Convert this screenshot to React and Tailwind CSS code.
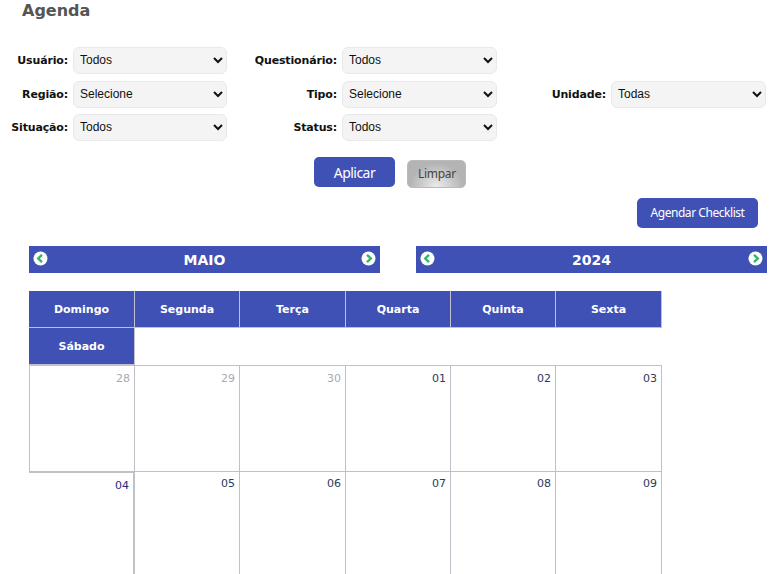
import React from 'react';

const mono = "font-['DejaVu_Sans',sans-serif]";

const Field = ({ label, value, options }) => (
  <>
    <label className={`${mono} text-[11px] font-bold tracking-[-0.15px] text-[#111] text-right self-center pt-[2px]`}>{label}</label>
    <select
      defaultValue={value}
      className="ml-[5px] w-[calc(100%-5px)] h-[27px] pl-[2px] pb-[2px] rounded-[6px] border border-[#e9e9e9] bg-[#f4f4f4] text-[12px] text-[#111] font-['Liberation_Sans',sans-serif]"
    >
      {(options || [value]).map(o => <option key={o}>{o}</option>)}
    </select>
  </>
);

const Arrow = ({ dir }) => (
  <svg width="15" height="15" viewBox="0 0 15 15" className="shrink-0">
    <circle cx="7.5" cy="7.5" r="7" fill="#fff" />
    <path
      d={dir === 'left' ? 'M9 3.8 5.2 7.5 9 11.2' : 'M6 3.8 9.8 7.5 6 11.2'}
      fill="none"
      stroke="#35b56a"
      strokeWidth="2.4"
    />
  </svg>
);

const NavBar = ({ title }) => (
  <div className="w-[351px] h-[27px] bg-[#3f51b5] flex items-start justify-between px-[4px] pt-[5px]">
    <Arrow dir="left" />
    <span className={`${mono} text-[14px] font-bold text-white leading-[16px] pt-[1px]`}>{title}</span>
    <Arrow dir="right" />
  </div>
);

const weekDays = ['Domingo', 'Segunda', 'Terça', 'Quarta', 'Quinta', 'Sexta', 'Sábado'];
const firstWeek = [
  { n: '28', muted: true },
  { n: '29', muted: true },
  { n: '30', muted: true },
  { n: '01' },
  { n: '02' },
  { n: '03' },
];
const secondWeek = ['05', '06', '07', '08', '09'];

export default function App() {
  return (
    <div className="w-[782px] h-[574px] overflow-hidden bg-white">
      <h1 className={`${mono} pl-[22px] pt-[1px] text-[16px] font-bold text-[#555] leading-[19px]`}>Agenda</h1>

      <div className="mt-[27px] grid grid-cols-[68px_159px_110px_160px_109px_160px] grid-rows-[27px_26px_27px] gap-y-[7px]">
        <Field label="Usuário:" value="Todos" />
        <Field label="Questionário:" value="Todos" />
        <div className="col-span-2" />
        <Field label="Região:" value="Selecione" />
        <Field label="Tipo:" value="Selecione" />
        <Field label="Unidade:" value="Todas" />
        <Field label="Situação:" value="Todos" />
        <Field label="Status:" value="Todos" />
      </div>

      <div className="mt-[16px] pl-[314px] flex items-start gap-[12px] font-['Noto_Sans',sans-serif]">
        <button className="w-[81px] h-[30px] rounded-[5px] bg-[#3f51b5] text-white text-[14px] tracking-[-0.55px]">Aplicar</button>
        <button className="mt-[3px] w-[59px] h-[28px] rounded-[5px] bg-[radial-gradient(ellipse_at_bottom,#ececec,#b4b4b4_65%)] border border-[#bbb] text-[#444] text-[12px] tracking-[-0.3px] pl-[1px]">Limpar</button>
      </div>

      <div className="mt-[10px] pr-[24px] flex justify-end font-['Noto_Sans',sans-serif]">
        <button className="w-[121px] h-[30px] rounded-[5px] bg-[#3f51b5] text-white text-[12px] tracking-[-0.45px]">Agendar Checklist</button>
      </div>

      <div className="mt-[18px] pl-[29px] flex gap-[36px]">
        <NavBar title="MAIO" />
        <NavBar title="2024" />
      </div>

      <div className="mt-[18px] ml-[29px] w-[633px] grid grid-cols-[106px_105px_106px_105px_105px_106px]">
        {weekDays.map(d => (
          <div
            key={d}
            className={`${mono} h-[37px] pt-[2px] bg-[#3f51b5] border-r border-b border-[#c0c0d0] flex items-center justify-center text-[11px] font-bold text-white`}
          >
            {d}
          </div>
        ))}
      </div>

      <div className="ml-[29px] w-[633px] grid grid-cols-[105px_105px_106px_105px_105px_107px]">
        {firstWeek.map((d, i) => (
          <div
            key={d.n}
            className={`${mono} h-[106px] border-t border-l border-[#c0c0c8] ${i === 5 ? 'border-r pr-[4px]' : 'pr-[4px]'} text-right text-[11px] pt-[6px] leading-[13px] ${d.muted ? 'text-[#a9a9b2]' : 'text-[#2a3a5c]'}`}
          >
            {d.n}
          </div>
        ))}
      </div>

      <div className="ml-[29px] w-[633px] grid grid-cols-[106px_105px_106px_105px_105px_106px]">
        <div className={`${mono} h-[107px] border-t-2 border-r-2 border-[#c0c0c8] text-right text-[11px] pt-[6px] pr-[4px] leading-[13px] text-[#2a2a7c]`}>04</div>
        {secondWeek.map(n => (
          <div
            key={n}
            className={`${mono} h-[107px] border-t border-r border-[#c0c0c8] text-right text-[11px] pt-[5px] pr-[4px] leading-[13px] text-[#2a3a5c]`}
          >
            {n}
          </div>
        ))}
      </div>
    </div>
  );
}
